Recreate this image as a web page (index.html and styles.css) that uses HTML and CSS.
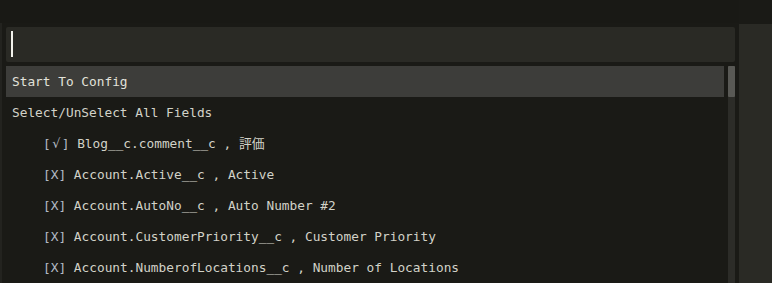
FILE: index.html
```html
<!DOCTYPE html>
<html>
<head>
    <meta charset="utf-8">
    <meta name="viewport" content="width=device-width, initial-scale=1">
    <title>Quick Panel</title>
    <link rel="stylesheet" href="styles.css">
</head>

<body>
    <div class="window">
        <div class="editor">
            <div class="tabbar"></div>
            <div class="quick-panel">
                <div class="search-box">
                    <span class="caret"></span>
                </div>
                <div class="results">
                    <ul class="items">
                        <li class="item selected">Start To Config</li>
                        <li class="item">Select/UnSelect All Fields</li>
                        <li class="item field"><span class="mark">[<span class="tick">√</span>]</span> Blog__c.comment__c , 評価</li>
                        <li class="item field"><span class="mark">[X]</span> Account.Active__c , Active</li>
                        <li class="item field"><span class="mark">[X]</span> Account.AutoNo__c , Auto Number #2</li>
                        <li class="item field"><span class="mark">[X]</span> Account.CustomerPriority__c , Customer Priority</li>
                        <li class="item field"><span class="mark">[X]</span> Account.NumberofLocations__c , Number of Locations</li>
                    </ul>
                    <div class="scrollbar">
                        <div class="thumb"></div>
                    </div>
                </div>
            </div>
        </div>
        <div class="side-panel"></div>
    </div>
</body>
</html>
```

FILE: styles.css
```css
/* Dark quick panel, Monokai-like */
html, body {
    margin: 0;
    padding: 0;
    height: 100%;
    overflow: hidden;
    background-color: #1a1a16;
}
.window {
    display: flex;
    height: 283px;
}
.editor {
    flex: 1;
    display: flex;
    flex-direction: column;
}
.tabbar {
    height: 24px;
    background-color: #191915;
}
.quick-panel {
    flex: 1;
    border-left: 2px solid #23231f;
    padding: 4px 4px 0 4px;
    display: flex;
    flex-direction: column;
    gap: 4px;
}
.search-box {
    height: 35px;
    background-color: #2a2a25;
    border-radius: 2px;
    padding: 4px 0 0 5px;
    box-sizing: border-box;
}
.caret {
    display: block;
    width: 2px;
    height: 26px;
    background-color: #f2f2ec;
}
.results {
    flex: 1;
    display: flex;
    gap: 4px;
    min-height: 0;
}
.items {
    flex: 1;
    list-style: none;
    margin: 0;
    padding: 0;
    font-family: "DejaVu Sans Mono", "Noto Sans CJK JP", monospace;
    font-size: 12.8px;
    color: #d2d2c8;
}
.item {
    height: 31px;
    line-height: 31px;
    padding-left: 6px;
    white-space: nowrap;
}
.item.selected {
    background-color: #3d3d3a;
    color: #e2e2da;
}
.item.field {
    padding-left: 37px;
}
.mark {
    color: #b4bac6;
}
.tick {
    font-family: "DejaVu Sans", sans-serif;
    display: inline-block;
    width: 11px;
    text-align: center;
}
.scrollbar {
    width: 7px;
    background-color: #2c2c28;
}
.thumb {
    height: 31px;
    background-color: #595955;
    border-radius: 1px;
}
.side-panel {
    width: 33px;
    margin-top: 24px;
    background-color: #2a2a25;
}
```
